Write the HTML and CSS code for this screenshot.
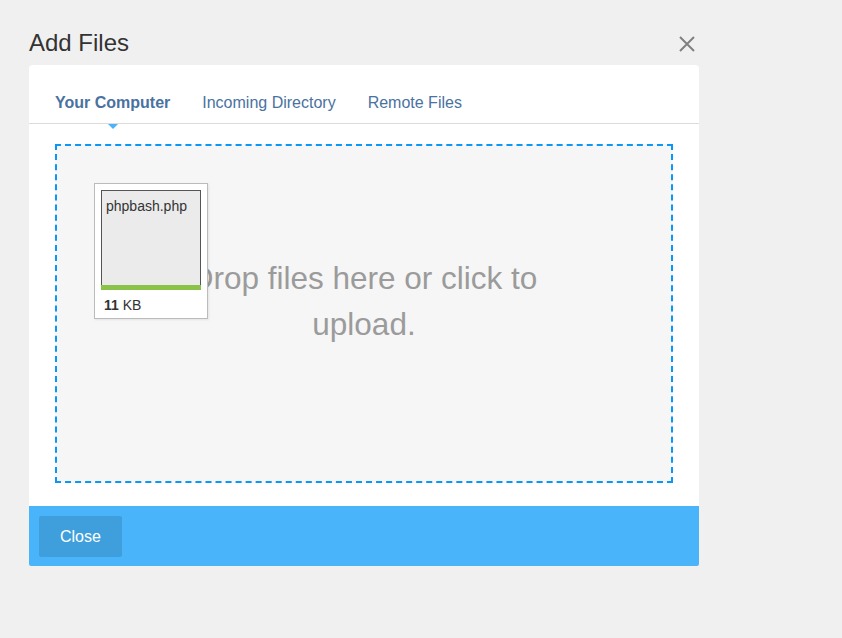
FILE: index.html
```html
<!DOCTYPE html>
<html lang="en">
<head>
<meta charset="utf-8">
<title>Add Files</title>
<link rel="stylesheet" href="styles.css">
</head>
<body>
<div class="modal">
  <div class="modal-header">
    <h1 class="modal-title">Add Files</h1>
    <svg class="close-x" width="16" height="16" viewBox="0 0 16 16" aria-label="Close">
      <path d="M1 1 L15 15 M15 1 L1 15" stroke="#808080" stroke-width="2" fill="none"/>
    </svg>
  </div>
  <div class="card">
    <ul class="tabs">
      <li class="tab active">Your Computer</li>
      <li class="tab">Incoming Directory</li>
      <li class="tab">Remote Files</li>
    </ul>
    <div class="card-body">
      <div class="dropzone">
        <div class="dz-message">Drop files here or click to upload.</div>
        <div class="preview">
          <div class="thumb">
            <span class="filename">phpbash.php</span>
            <div class="progress"></div>
          </div>
          <div class="size"><strong>11</strong> KB</div>
        </div>
      </div>
    </div>
    <div class="card-footer">
      <button class="btn-close">Close</button>
    </div>
  </div>
</div>
</body>
</html>
```
FILE: styles.css
```css
* { box-sizing: border-box; }

html, body {
  margin: 0;
  padding: 0;
  background: #f0f0f0;
  font-family: "Liberation Sans", Arial, sans-serif;
}

.modal {
  width: 670px;
  margin-left: 29px;
  padding-top: 30px;
}

.modal-header {
  display: flex;
  justify-content: space-between;
  align-items: flex-start;
  margin-bottom: 9px;
}

.modal-title {
  margin: 0;
  font-size: 24px;
  line-height: 26px;
  font-weight: normal;
  color: #333;
}

.close-x {
  margin-top: 6px;
  margin-right: 4px;
}

.card {
  background: #fff;
  border-radius: 4px 4px 2px 2px;
  overflow: hidden;
}

.tabs {
  list-style: none;
  margin: 0;
  padding: 0 0 0 10px;
  display: flex;
  border-bottom: 1px solid #dcdcdc;
}

.tab {
  position: relative;
  padding: 28px 16px 10px;
  font-size: 16px;
  line-height: 20px;
  color: #4a72a0;
}

.tab.active {
  font-weight: bold;
}

.tab.active::after {
  content: "";
  position: absolute;
  left: 50%;
  top: calc(100% + 1px);
  margin-left: -5px;
  border-left: 5px solid transparent;
  border-right: 5px solid transparent;
  border-top: 5px solid #4ab4fb;
}

.card-body {
  padding: 20px 26px 23px;
}

.dropzone {
  position: relative;
  height: 339px;
  border: 2px dashed #0a97f5;
  background: #f6f6f6;
  padding-top: 109px;
}

.dz-message {
  max-width: 410px;
  margin: 0 auto;
  text-align: center;
  font-size: 31.5px;
  line-height: 46px;
  color: #9b9b9b;
}

.preview {
  position: absolute;
  left: 37px;
  top: 37px;
  width: 114px;
  height: 136px;
  background: #fff;
  border: 1px solid #bbb;
  box-shadow: 1px 1px 2px rgba(0,0,0,0.08);
  padding: 6px;
}

.thumb {
  position: relative;
  width: 100px;
  height: 100px;
  background: #ebebeb;
  border: 1px solid #555;
  border-bottom: none;
  padding: 7px 0 0 4px;
}

.filename {
  display: block;
  font-size: 14px;
  line-height: 16px;
  color: #333;
}

.progress {
  position: absolute;
  left: -1px;
  right: -1px;
  bottom: 0;
  height: 5px;
  background: #8bc34a;
}

.size {
  margin-top: 7px;
  padding-left: 3px;
  font-size: 14px;
  line-height: 16px;
  color: #333;
}

.size strong {
  font-weight: bold;
}

.card-footer {
  background: #4ab4fb;
  padding: 10px;
  height: 60px;
}

.btn-close {
  height: 41px;
  padding: 1px 21px 0;
  border: none;
  border-radius: 2px;
  background: #3e9fdc;
  color: #fff;
  font-family: "Liberation Sans", Arial, sans-serif;
  font-size: 16px;
  line-height: 40px;
  cursor: pointer;
}
```
